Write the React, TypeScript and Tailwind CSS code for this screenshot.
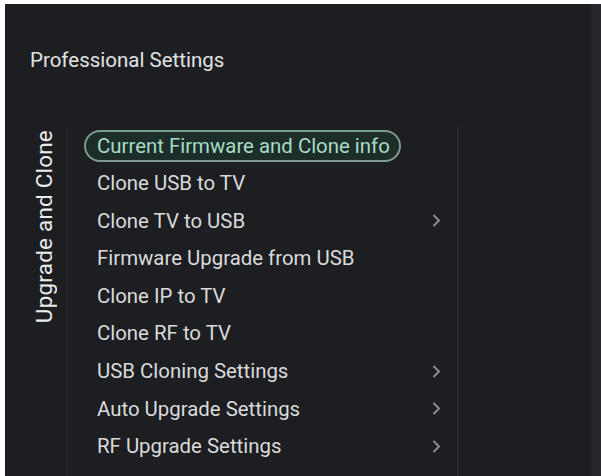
import React from "react";

const items: { label: string; chevron?: boolean; selected?: boolean }[] = [
  { label: "Current Firmware and Clone info", selected: true },
  { label: "Clone USB to TV" },
  { label: "Clone TV to USB", chevron: true },
  { label: "Firmware Upgrade from USB" },
  { label: "Clone IP to TV" },
  { label: "Clone RF to TV" },
  { label: "USB Cloning Settings", chevron: true },
  { label: "Auto Upgrade Settings", chevron: true },
  { label: "RF Upgrade Settings", chevron: true },
];

function Chevron() {
  return (
    <svg width="9" height="13" viewBox="0 0 9 13" className="shrink-0">
      <path d="M2 1.5 L7 6.5 L2 11.5" fill="none" stroke="#8a8c8f" strokeWidth="2" strokeLinecap="round" strokeLinejoin="round" />
    </svg>
  );
}

export default function App() {
  return (
    <div className="w-[601px] h-[476px] bg-white pt-[4px] pl-[5px] overflow-hidden" style={{ fontFamily: "Roboto, 'Liberation Sans', sans-serif" }}>
      <div className="flex h-full w-full">
        <div className="flex flex-1 flex-col bg-[#1c1e22]">
          <div className="h-[123px] pl-[25px] pt-[44px] text-[20.5px] leading-[24px] text-[#e2e2e2]">
            Professional Settings
          </div>
          <div className="flex flex-1">
            <div className="flex w-[64px] justify-start border-r-[3px] border-[#202327] pl-[27px]">
              <div className="mt-[3px] h-fit rotate-180 text-[22.5px] leading-[24px] tracking-[0.2px] text-[#ececec] [writing-mode:vertical-rl]">
                Upgrade and Clone
              </div>
            </div>
            <div className="flex w-[390px] flex-col border-r-2 border-[#24272b] pl-[15px]">
              {items.map((it) => (
                <div key={it.label} className="flex h-[37.6px] items-center pr-[16px]">
                  {it.selected ? (
                    <div className="flex h-[32px] items-center rounded-full border-2 border-[#7f9a8e] bg-[#1d2e2a] pl-[11px] pr-[9px] text-[20.4px] text-[#a6dcc4]">
                      {it.label}
                    </div>
                  ) : (
                    <div className="pl-[13px] text-[20.4px] text-[#dadada]">{it.label}</div>
                  )}
                  <div className="flex-1" />
                  {it.chevron && <Chevron />}
                </div>
              ))}
            </div>
            <div className="flex-1" />
          </div>
        </div>
        <div className="w-[10px] bg-[#26262a]" />
      </div>
    </div>
  );
}
